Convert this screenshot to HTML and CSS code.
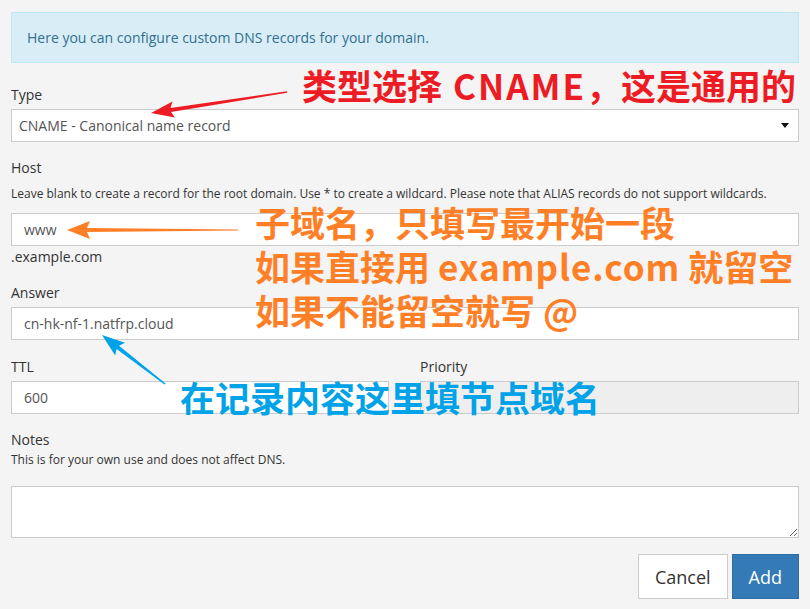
FILE: index.html
```html
<!DOCTYPE html>
<html lang="zh-CN">
<head>
<meta charset="utf-8">
<title>DNS record</title>
<link rel="stylesheet" href="styles.css">
</head>
<body>
<div class="page">
  <div class="alert">Here you can configure custom DNS records for your domain.</div>

  <div class="group group-type">
    <div class="label">Type</div>
    <div class="select">
      <span>CNAME - Canonical name record</span>
      <svg class="caret" width="8" height="5" viewBox="0 0 8 5"><polygon points="0,0 8,0 4,5" fill="#111"/></svg>
    </div>
  </div>

  <div class="group group-host">
    <div class="label">Host</div>
    <div class="help help-host">Leave blank to create a record for the root domain. Use * to create a wildcard. Please note that ALIAS records do not support wildcards.</div>
    <input class="input" type="text" value="www">
    <div class="suffix">.example.com</div>
  </div>

  <div class="group group-answer">
    <div class="label">Answer</div>
    <input class="input" type="text" value="cn-hk-nf-1.natfrp.cloud">
  </div>

  <div class="group row">
    <div class="col">
      <div class="label">TTL</div>
      <input class="input" type="text" value="600">
    </div>
    <div class="col">
      <div class="label">Priority</div>
      <input class="input disabled" type="text" value="" disabled>
    </div>
  </div>

  <div class="group group-notes">
    <div class="label">Notes</div>
    <div class="help help-notes">This is for your own use and does not affect DNS.</div>
    <textarea class="textarea"></textarea>
  </div>

  <div class="actions">
    <button class="btn btn-default">Cancel</button>
    <button class="btn btn-primary">Add</button>
  </div>

  <svg class="arrows" width="810" height="609" viewBox="0 0 810 609">
    <polygon fill="#ed1c24" points="286.9,91.2 170.5,108.0 172.5,101.6 151,113 174.9,117.4 171.1,112.0 287.1,92.8"/>
    <polygon fill="#ff7f27" points="238,229.4 87,228 90,221 67,230 90,239 87,232 238,230.6"/>
    <polygon fill="#00a2e8" points="165.5,383.4 119.0,345.7 125.0,342.8 102,335 115.2,355.4 116.6,348.9 164.5,384.6"/>
  </svg>
  <div class="note note-red">类型选择 <span class="lat-red">CNAME</span>，这是通用的</div>
  <div class="note note-orange">子域名，只填写最开始一段<br>如果直接用 <span class="lat-orange">example.com</span> 就留空<br>如果不能留空就写 @</div>
  <div class="note note-blue">在记录内容这里填节点域名</div>
</div>
</body>
</html>
```

FILE: styles.css
```css
html, body {
  margin: 0;
  padding: 0;
}
body {
  background: #f4f4f4;
  font-family: "Open Sans", "Noto Sans", sans-serif;
  font-size: 14px;
  color: #333;
  width: 810px;
  height: 609px;
  overflow: hidden;
}
.page {
  position: relative;
  padding: 12px 11px 0;
}
.alert {
  background: #d9edf7;
  border: 1px solid #bce8f1;
  color: #31708f;
  padding: 15px;
  line-height: 19px;
}
.group {
  margin-top: 17px;
}
.group-type {
  margin-top: 23px;
}
.group-answer {
  margin-top: 17px;
}
.row {
  margin-top: 18px;
}
.label {
  line-height: 18px;
  margin-bottom: 5px;
}
.help {
  font-size: 12px;
  line-height: 16px;
}
.help-host {
  padding-top: 4px;
  margin-bottom: 11px;
}
.help-notes {
  margin-top: -2px;
  margin-bottom: 18px;
}
.select {
  height: 33px;
  box-sizing: border-box;
  border: 1px solid #ccc;
  background: #fff;
  color: #555;
  padding: 0 9px 0 7px;
  display: flex;
  align-items: center;
  justify-content: space-between;
}
.caret {
  display: block;
}
.input {
  display: block;
  width: 100%;
  height: 33px;
  box-sizing: border-box;
  border: 1px solid #ccc;
  border-radius: 0;
  background: #fff;
  color: #555;
  padding: 0 12px;
  margin: 0;
  font-family: "Open Sans", "Noto Sans", sans-serif;
  font-size: 14px;
  outline: none;
}
.input.disabled {
  background: #eee;
}
.suffix {
  margin-top: 1px;
  line-height: 20px;
}
.row {
  display: grid;
  grid-template-columns: 378px 379px;
  column-gap: 31px;
}
.textarea {
  display: block;
  width: 100%;
  height: 52px;
  box-sizing: border-box;
  border: 1px solid #ccc;
  border-radius: 0;
  background: #fff;
  margin: 0;
  resize: vertical;
  font-family: "Open Sans", "Noto Sans", sans-serif;
  font-size: 14px;
}
.actions {
  margin-top: 16px;
  display: flex;
  justify-content: flex-end;
  gap: 4px;
}
.btn {
  height: 45px;
  padding: 0 16px;
  font-family: "Open Sans", "Noto Sans", sans-serif;
  font-size: 18px;
  border-radius: 0;
  cursor: pointer;
}
.btn-default {
  background: #fff;
  border: 1px solid #ccc;
  color: #333;
}
.btn-primary {
  background: #337ab7;
  border: 1px solid #2e6da4;
  color: #fff;
}
.arrows {
  position: absolute;
  left: 0;
  top: 0;
  pointer-events: none;
}
.note {
  position: absolute;
  font-family: "Noto Sans CJK SC", "Noto Sans", sans-serif;
  font-weight: bold;
  font-size: 35px;
  line-height: 44px;
  white-space: nowrap;
}
.lat-red {
  letter-spacing: 2px;
  word-spacing: 4px;
}
.lat-orange {
  letter-spacing: 1px;
}
.note-red {
  left: 302px;
  top: 63px;
  color: #ed1c24;
  word-spacing: 3px;
}
.note-orange {
  left: 255px;
  top: 200px;
  color: #ff7f27;
}
.note-blue {
  left: 180px;
  top: 375px;
  color: #00a2e8;
}
```
